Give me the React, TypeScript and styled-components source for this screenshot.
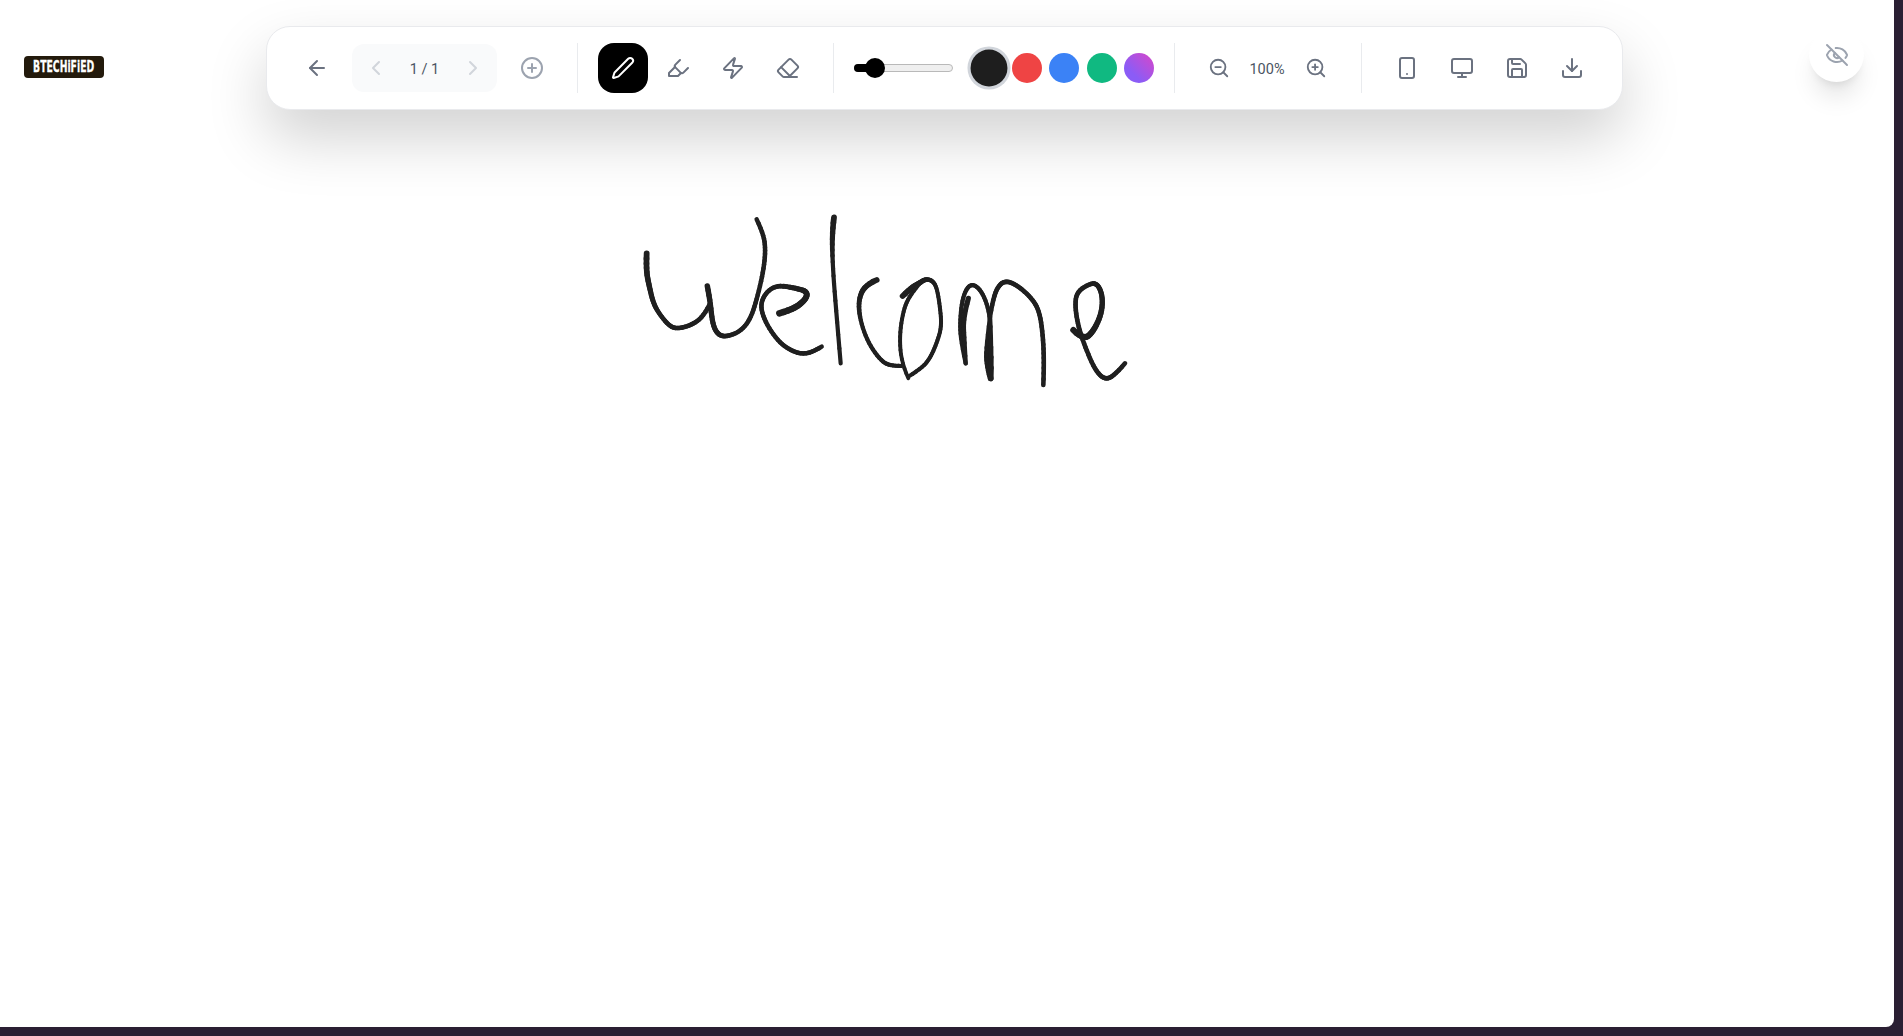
import React from "react";
import styled, { createGlobalStyle } from "styled-components";
import {
  ArrowLeft, ChevronLeft, ChevronRight, CirclePlus, Pen, Highlighter, Zap, Eraser,
  ZoomOut, ZoomIn, Smartphone, Monitor, Save, Download, EyeOff,
} from "lucide-react";

const Global = createGlobalStyle`
  html, body { margin: 0; height: 100%; background: #2a1f33; overflow: hidden; }
  body { font-family: Roboto, "Liberation Sans", sans-serif; }
`;

const Panel = styled.main`
  position: relative;
  width: 1894px;
  height: 1027px;
  background: #fff;
  border-bottom-right-radius: 8px;
  overflow: hidden;
`;

const Header = styled.header`
  position: relative;
  z-index: 1;
  display: flex;
  align-items: flex-start;
  padding: 26px 30px 0 24px;
`;

const Logo = styled.div`
  width: 80px;
  height: 22px;
  margin-top: 30px;
  background: #231a0c;
  border-radius: 4px;
  display: flex;
  align-items: center;
  justify-content: center;
  flex: none;
`;

const LogoText = styled.span`
  display: inline-block;
  color: #fff;
  font-family: "DejaVu Sans", sans-serif;
  font-weight: 700;
  font-size: 16px;
  line-height: 22px;
  white-space: nowrap;
  -webkit-text-stroke: 0.3px #fff;
  transform: scaleX(0.58);
`;

const Toolbar = styled.nav`
  box-sizing: border-box;
  flex: none;
  width: 1357px;
  height: 84px;
  margin-left: 161.5px;
  padding: 0 25.5px;
  display: flex;
  align-items: center;
  background: #fff;
  border: 1px solid #e9eaed;
  border-radius: 24px;
  box-shadow: 0 28px 60px rgba(0, 0, 0, 0.18);
`;

const Group = styled.div<{ $gap?: number }>`
  display: flex;
  align-items: center;
  gap: ${(p) => p.$gap ?? 0}px;
`;

const Divider = styled.span`
  flex: none;
  width: 1px;
  height: 50px;
  margin: 0 20px;
  background: #e9ebee;
`;

const IconButton = styled.button<{ $active?: boolean; $tone?: string; $w?: number }>`
  flex: none;
  width: ${(p) => p.$w ?? 50}px;
  height: 50px;
  padding: 0;
  border: 0;
  border-radius: 16px;
  display: flex;
  align-items: center;
  justify-content: center;
  background: ${(p) => (p.$active ? "#000" : "transparent")};
  color: ${(p) => (p.$active ? "#fff" : p.$tone ?? "#6b7280")};
`;

const PagePill = styled.div`
  flex: none;
  box-sizing: border-box;
  width: 145px;
  height: 48px;
  padding: 0 12px;
  border-radius: 12px;
  background: #f9fafb;
  display: flex;
  align-items: center;
  justify-content: space-between;
  color: #d1d5db;
`;

const PageLabel = styled.span`
  color: #4b5563;
  font-size: 14.5px;
  position: relative;
  top: 1px;
  white-space: nowrap;
`;

const Slider = styled.div`
  position: relative;
  flex: none;
  box-sizing: border-box;
  width: 99px;
  height: 8px;
  margin-right: 21px;
  background: #efefef;
  border: 1px solid #b9b9b9;
  border-radius: 4px;
`;

const SliderFill = styled.span`
  display: block;
  height: 100%;
  margin: -1px;
  padding: 1px 0;
  background: #000;
  border-radius: 4px 0 0 4px;
`;

const SliderThumb = styled.span`
  position: absolute;
  top: -7px;
  width: 20px;
  height: 20px;
  border-radius: 50%;
  background: #000;
`;

const Swatch = styled.span<{ $fill: string; $active?: boolean }>`
  flex: none;
  width: 30px;
  height: 30px;
  border-radius: 50%;
  background: ${(p) => p.$fill};
  ${(p) => (p.$active ? "transform: scale(1.23); box-shadow: 0 0 0 2.5px #d1d5db;" : "")}
`;

const ZoomLabel = styled.span`
  flex: none;
  width: 48px;
  text-align: center;
  color: #4b5563;
  font-size: 14.5px;
  position: relative;
  top: 1px;
`;

const EyeButton = styled.button`
  flex: none;
  width: 55px;
  height: 55px;
  margin: 1px 0 0 auto;
  padding: 0;
  border: 0;
  border-radius: 50%;
  background: #fff;
  color: #9ca3af;
  display: flex;
  align-items: center;
  justify-content: center;
  box-shadow: 0 20px 25px -5px rgba(0, 0, 0, 0.1), 0 8px 10px -6px rgba(0, 0, 0, 0.1);
`;

const Canvas = styled.svg`
  position: absolute;
  inset: 0;
  width: 100%;
  height: 100%;
`;

type Stroke = { o: [number, number]; w: [number, number]; p: number[] };

const Z4: [number, number] = [620, 200];
const Z5: [number, number] = [930, 200];

const strokes: Stroke[] = [
  { o: Z4, w: [5.8, 4.6], p: [80,160, 78,210, 88,260, 100,310, 120,345, 150,380, 175,386, 215,375, 250,350, 268,315] },
  { o: Z4, w: [5.5, 4.5], p: [262,258, 270,300, 278,375, 295,405, 320,410, 360,395, 390,360, 410,300, 430,215, 437,150, 430,100, 410,58] },
  { o: Z4, w: [6.5, 4.5], p: [478,340, 520,328, 558,298, 562,275, 530,265, 470,255, 435,280, 420,320, 440,375, 480,430, 520,455, 550,462, 580,455, 605,440] },
  { o: Z4, w: [5.8, 4.2], p: [642,52, 636,100, 638,200, 650,350, 662,490] },
  { o: Z4, w: [5.8, 4.2], p: [770,240, 735,255, 715,300, 720,360, 745,430, 785,485, 815,498, 845,498] },
  { o: Z4, w: [5.8, 4], p: [848,288, 875,262, 900,248, 915,238, 935,240, 950,260, 960,320, 965,380, 950,430, 930,475, 905,505, 865,530] },
  { o: Z4, w: [3.8, 4], p: [865,535, 845,490, 838,410, 850,330, 870,285, 898,252] },
  { o: Z5, w: [4.2, 4.2], p: [107,490, 92,420, 90,360, 98,290, 120,250, 150,265, 175,320, 180,360] },
  { o: Z5, w: [5.2, 4.4], p: [115,295, 100,350, 103,420, 107,490] },
  { o: Z5, w: [4.4, 5.8], p: [180,350, 170,440, 172,500, 182,535] },
  { o: Z5, w: [5.8, 4.4], p: [182,535, 185,440, 180,350] },
  { o: Z5, w: [4.6, 4.6], p: [180,350, 190,290, 210,250, 235,243, 270,262, 310,300, 330,340, 340,420, 342,500, 340,555] },
  { o: Z5, w: [6.2, 4.6], p: [430,390, 460,420, 490,395, 515,340, 518,290, 505,255, 485,248, 440,275, 435,320, 445,380, 465,440, 495,510, 525,540, 555,525, 585,490] },
];

type Seg = { x1: number; y1: number; x2: number; y2: number; w: number };

const toSegments = ({ o, w, p }: Stroke): Seg[] => {
  const pts: [number, number][] = [];
  for (let i = 0; i < p.length; i += 2) pts.push([o[0] + p[i] / 3, o[1] + p[i + 1] / 3]);
  const samples: [number, number][] = [pts[0]];
  const mid = (a: [number, number], b: [number, number]): [number, number] => [(a[0] + b[0]) / 2, (a[1] + b[1]) / 2];
  for (let i = 1; i < pts.length - 1; i++) {
    const a = i === 1 ? pts[0] : mid(pts[i - 1], pts[i]);
    const b = i === pts.length - 2 ? pts[pts.length - 1] : mid(pts[i], pts[i + 1]);
    for (let k = 1; k <= 6; k++) {
      const t = k / 6;
      const u = 1 - t;
      samples.push([
        u * u * a[0] + 2 * u * t * pts[i][0] + t * t * b[0],
        u * u * a[1] + 2 * u * t * pts[i][1] + t * t * b[1],
      ]);
    }
  }
  return samples.slice(1).map((s, i) => ({
    x1: samples[i][0],
    y1: samples[i][1],
    x2: s[0],
    y2: s[1],
    w: w[0] + ((w[1] - w[0]) * Math.min(1, (i / samples.length) * 2.5)),
  }));
};

const segments = strokes.flatMap(toSegments);

export default function App() {
  return (
    <>
      <Global />
      <Panel>
        <Canvas viewBox="0 0 1894 1027" aria-label="Welcome">
          <g stroke="#1f1f1f" strokeLinecap="round">
            {segments.map((s, i) => (
              <line key={i} x1={s.x1} y1={s.y1} x2={s.x2} y2={s.y2} strokeWidth={s.w} />
            ))}
          </g>
        </Canvas>
        <Header>
          <Logo>
            <LogoText>BTECHiFiED</LogoText>
          </Logo>
          <Toolbar>
            <Group $gap={10}>
              <IconButton aria-label="Back"><ArrowLeft size={24} /></IconButton>
              <PagePill>
                <ChevronLeft size={24} />
                <PageLabel>1 / 1</PageLabel>
                <ChevronRight size={24} />
              </PagePill>
              <IconButton $tone="#9ca3af" aria-label="Add page"><CirclePlus size={24} /></IconButton>
            </Group>
            <Divider />
            <Group $gap={5}>
              <IconButton $active aria-label="Pen"><Pen size={24} /></IconButton>
              <IconButton aria-label="Highlighter"><Highlighter size={24} /></IconButton>
              <IconButton aria-label="Laser"><Zap size={24} /></IconButton>
              <IconButton aria-label="Eraser"><Eraser size={24} /></IconButton>
            </Group>
            <Divider />
            <Slider>
              <SliderFill style={{ width: "21%" }} />
              <SliderThumb style={{ left: "10px" }} />
            </Slider>
            <Group $gap={7.5}>
              <Swatch $fill="#1e1e1e" $active />
              <Swatch $fill="#ef4444" />
              <Swatch $fill="#3b82f6" />
              <Swatch $fill="#10b981" />
              <Swatch $fill="linear-gradient(45deg, #8b5cf6 30%, #d946c8 100%)" />
            </Group>
            <Divider />
            <Group>
              <IconButton $w={48} aria-label="Zoom out"><ZoomOut size={22} /></IconButton>
              <ZoomLabel>100%</ZoomLabel>
              <IconButton $w={50} aria-label="Zoom in"><ZoomIn size={22} /></IconButton>
            </Group>
            <Divider />
            <Group $gap={5}>
              <IconButton aria-label="Phone"><Smartphone size={24} /></IconButton>
              <IconButton aria-label="Desktop"><Monitor size={24} /></IconButton>
              <IconButton aria-label="Save"><Save size={24} /></IconButton>
              <IconButton aria-label="Download"><Download size={24} /></IconButton>
            </Group>
          </Toolbar>
          <EyeButton aria-label="Hide"><EyeOff size={24} /></EyeButton>
        </Header>
      </Panel>
    </>
  );
}
